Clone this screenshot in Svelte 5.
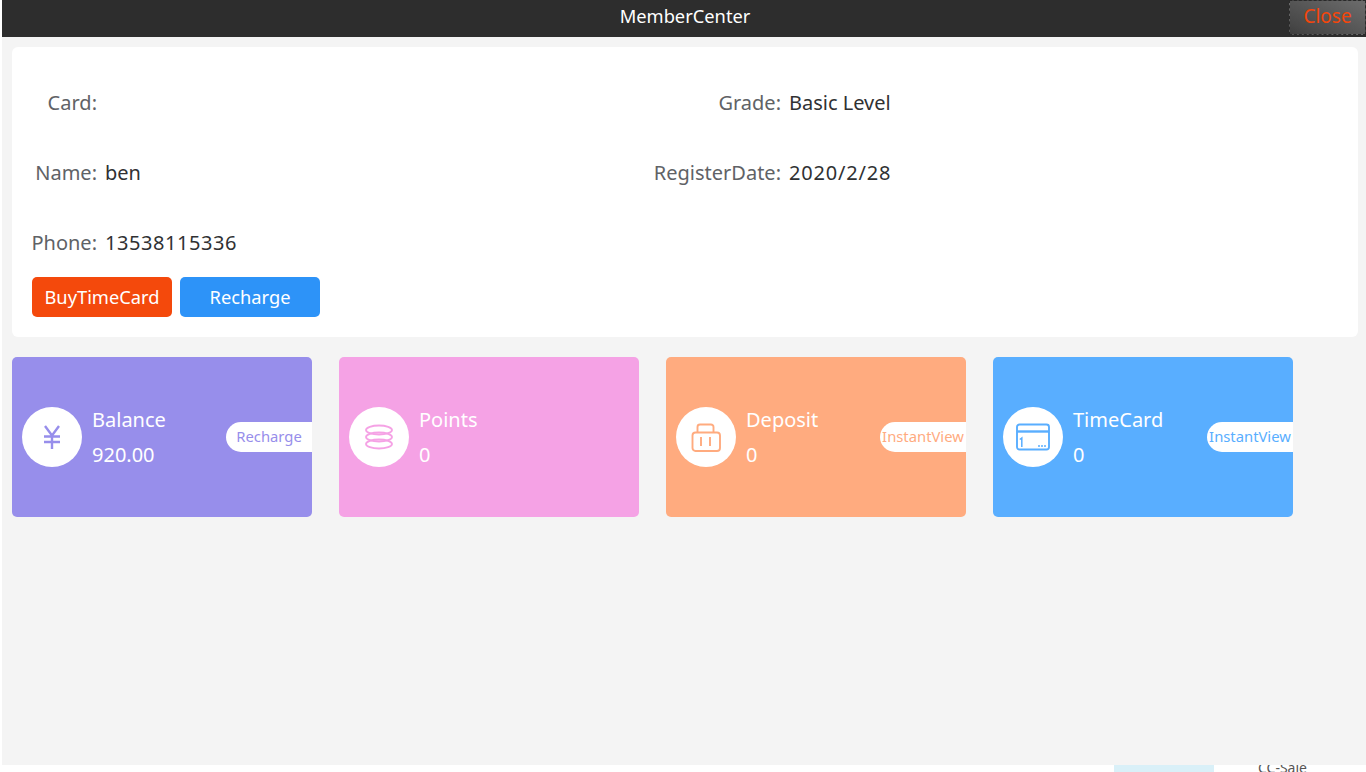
<script>
  const rows = [
    [{ label: 'Card:', value: '' }, { label: 'Grade:', value: 'Basic Level' }],
    [{ label: 'Name:', value: 'ben' }, { label: 'RegisterDate:', value: '2020/2/28', kind: 'date' }],
    [{ label: 'Phone:', value: '13538115336', kind: 'num' }]
  ];

  const cards = [
    { key: 'balance', title: 'Balance', value: '920.00', action: 'Recharge', color: '#978eeb' },
    { key: 'points', title: 'Points', value: '0', action: '', color: '#f5a2e5' },
    { key: 'deposit', title: 'Deposit', value: '0', action: 'InstantView', color: '#ffab7f' },
    { key: 'timecard', title: 'TimeCard', value: '0', action: 'InstantView', color: '#59aeff' }
  ];
</script>

<div class="backdrop">
  <div class="modal">
    <header class="titlebar">
      <span class="title">MemberCenter</span>
      <button class="close">Close</button>
    </header>

    <div class="body">
      <section class="info">
        {#each rows as row}
          <div class="info-row">
            {#each row as item}
              <div class="info-item">
                <span class="label">{item.label}</span>
                <span class="value" class:num={item.kind === 'num'} class:date={item.kind === 'date'}>{item.value}</span>
              </div>
            {/each}
          </div>
        {/each}
        <div class="actions">
          <button class="btn buy">BuyTimeCard</button>
          <button class="btn recharge">Recharge</button>
        </div>
      </section>

      <section class="cards">
        {#each cards as card}
          <div class="card" style="--accent: {card.color}">
            <div class="circle">
              {#if card.key === 'balance'}
                <svg width="28" height="28" viewBox="0 0 28 28" fill="none" stroke="currentColor" stroke-width="2.4">
                  <path d="M7 3 14 12.500 21 3M6 13.500h16M6 19h16M14 12.500V26" />
                </svg>
              {:else if card.key === 'points'}
                <svg width="30" height="26" viewBox="0 0 30 26" fill="none" stroke="currentColor" stroke-width="1.800">
                  <ellipse cx="15" cy="6" rx="13" ry="4.500" />
                  <ellipse cx="15" cy="13" rx="13" ry="4.500" />
                  <ellipse cx="15" cy="20" rx="13" ry="4.500" />
                </svg>
              {:else if card.key === 'deposit'}
                <svg width="32" height="32" viewBox="0 0 32 32" fill="none" stroke="currentColor" stroke-width="1.900">
                  <rect x="2.500" y="11.500" width="27.500" height="18.500" rx="3" />
                  <path d="M7.500 11.500V6a2.500 2.500 0 0 1 2.500-2.500h11A2.500 2.500 0 0 1 23.500 6v5.500M11 16v9M20 16v9" />
                </svg>
              {:else}
                <svg width="34" height="28" viewBox="0 0 34 28" fill="none" stroke="currentColor" stroke-width="1.900">
                  <rect x="1" y="1.500" width="32" height="25" rx="2.500" />
                  <path d="M1 8.500h32" stroke-width="2.400" />
                  <path d="M3.800 16.500 5.800 15V24" stroke-width="1.500" />
                  <path d="M22 23h2M25 23h2M28 23h2" stroke-width="1.600" />
                </svg>
              {/if}
            </div>
            <div class="text">
              <div class="card-title">{card.title}</div>
              <div class="card-value">{card.value}</div>
            </div>
            {#if card.action}
              <button class="pill">{card.action}</button>
            {/if}
          </div>
        {/each}
      </section>
    </div>
  </div>

  <div class="behind">
    <div class="swatch"></div>
    <span class="behind-text">CC-Sale</span>
  </div>
</div>

<style>
  :global(body) {
    margin: 0;
    background: #fff;
    font-family: "Noto Sans", "Open Sans", sans-serif;
  }

  .backdrop {
    height: 772px;
    overflow: hidden;
    padding-left: 2px;
    box-sizing: border-box;
  }

  .modal {
    height: 765px;
    position: relative;
    z-index: 1;
    background: #f4f4f4;
    display: flex;
    flex-direction: column;
  }

  .titlebar {
    height: 37px;
    flex: none;
    position: relative;
    background: #2d2d2d;
    display: flex;
    align-items: center;
    justify-content: center;
    color: #fff;
    font-size: 18.300px;
  }

  .title {
    margin: 0 0 7px 2px;
  }

  .close {
    position: absolute;
    right: 0;
    top: 0;
    width: 77px;
    height: 35px;
    padding: 0 0 3px;
    border: 1px dashed #2a2a2a;
    background: linear-gradient(205deg, #6c6c6c 0%, #565656 50%, #474747 85%, #3e3e3e 100%);
    color: #f4460c;
    font: inherit;
    font-size: 19px;
  }

  .body {
    padding: 10px 8px 0 10px;
  }

  .info {
    height: 290px;
    box-sizing: border-box;
    padding-top: 20px;
    background: #fff;
    border-radius: 6px;
  }

  .info-row {
    display: flex;
    height: 70px;
    align-items: center;
  }

  .info-item {
    width: 50%;
    display: flex;
    gap: 8px;
    font-size: 20px;
    color: #303133;
  }

  .label {
    width: 85px;
    display: flex;
    justify-content: flex-end;
    white-space: nowrap;
    color: #606266;
  }

  .info-item:nth-child(2) .label {
    width: 96px;
  }

  .num {
    letter-spacing: 0.55px;
  }

  .date {
    letter-spacing: 0.8px;
  }

  .actions {
    display: flex;
    gap: 8px;
    padding-left: 20px;
  }

  .btn {
    width: 140px;
    height: 40px;
    padding: 0 0 2px;
    border: none;
    border-radius: 5px;
    color: #fff;
    font: inherit;
    font-size: 18.300px;
  }

  .buy {
    background: #f4490c;
  }

  .recharge {
    background: #2d93f8;
  }

  .cards {
    display: flex;
    gap: 27px;
    margin-top: 20px;
  }

  .card {
    width: 300px;
    height: 160px;
    padding-left: 10px;
    box-sizing: border-box;
    border-radius: 5px;
    background: var(--accent);
    display: flex;
    align-items: center;
    position: relative;
    color: #fff;
  }

  .circle {
    width: 60px;
    height: 60px;
    flex: none;
    border-radius: 50%;
    background: #fff;
    color: var(--accent);
    display: flex;
    align-items: center;
    justify-content: center;
  }

  .text {
    margin-left: 10px;
    font-size: 20px;
  }

  .card-title {
    line-height: 34px;
  }

  .card-value {
    line-height: 34px;
    padding-top: 1px;
  }

  .pill {
    position: absolute;
    right: 0;
    top: 65px;
    width: 86px;
    height: 30px;
    padding: 0 0 2px;
    border: none;
    border-radius: 15px 0 0 15px;
    background: #fff;
    color: var(--accent);
    font: inherit;
    font-size: 14.800px;
    white-space: nowrap;
  }

  .behind {
    position: relative;
    height: 7px;
  }

  .swatch {
    position: absolute;
    left: 1112px;
    top: 0;
    width: 100px;
    height: 7px;
    background: #d9f0f8;
  }

  .behind-text {
    position: absolute;
    left: 1256px;
    top: -7px;
    font-size: 14px;
    color: #555;
  }
</style>
